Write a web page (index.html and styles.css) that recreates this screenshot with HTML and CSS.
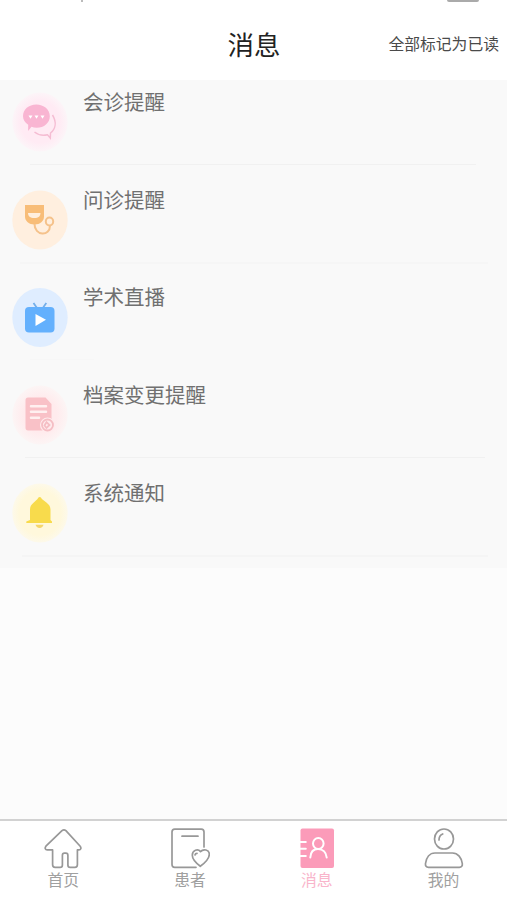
FILE: index.html
```html
<!DOCTYPE html>
<html lang="zh-CN">
<head>
<meta charset="utf-8">
<title>消息</title>
<link rel="stylesheet" href="styles.css">
</head>
<body>
<div class="app">
  <header class="header">
    <i class="status-tick"></i><i class="status-pill"></i>
    <h1 class="title">消息</h1>
    <span class="read-all">全部标记为已读</span>
  </header>
  <main class="list">
    <div class="row line-a">
      <svg class="icon" viewBox="0 0 56 60"><defs><radialGradient id="pinkGlow"><stop offset=".7" stop-color="#ffebf4"/><stop offset="1" stop-color="#fcf5f8"/></radialGradient></defs><ellipse cx="28" cy="30" rx="27.700" ry="29.500" fill="url(#pinkGlow)"/>
        <path class="pink-line" d="M22.500 40c3 2.500 8 4 13 2.800l2.800 3.200.2-5c4.800-4 6.500-10.500 2-18"/>
        <path class="pink" d="M24.300 12.500c7.600 0 13.500 5 13.500 11.700s-5.800 11.600-13 11.600c-2 0-3.700-.3-5.300-1l-3.400 4.200.1-6.200c-3.200-2.200-5.200-5-5.200-8.600 0-6.700 5.700-11.700 13.300-11.700Z"/>
        <path class="white" d="M16.500 23.500h4l-2 3.200ZM22.500 23.500h4l-2 3.200ZM28.500 23.500h4l-2 3.200Z"/></svg>
      <span class="label">会诊提醒</span>
    </div>
    <div class="row line-b">
      <svg class="icon" viewBox="0 0 56 60"><ellipse class="orange-bg" cx="28" cy="30" rx="27.700" ry="29.500"/>
        <path class="orange" d="M13 15h19v11.500c0 4.500-4 8-9.500 8S13 31 13 26.500Z"/><path class="cream" d="M16 23h12.500c0 3-2 5-6.200 5S16 26 16 23Z"/>
        <path class="orange-line" d="M22.500 34c0 12 15.500 13 15.500 1.500"/><ellipse class="orange-line" cx="37.500" cy="31.500" rx="3.700" ry="4"/></svg>
      <span class="label">问诊提醒</span>
    </div>
    <div class="row line-c">
      <svg class="icon" viewBox="0 -.5 56 60"><ellipse class="blue-bg" cx="28" cy="30" rx="27.700" ry="29.500"/>
        <path class="blue-line" d="m21.500 15.500 3.500 5m9.300-5-3.500 5"/><rect class="blue" x="13" y="19.500" width="29.500" height="25.500" rx="4"/><path class="white" d="M23.500 26.500 34 32.300l-10.500 6.200Z"/></svg>
      <span class="label">学术直播</span>
    </div>
    <div class="row line-d">
      <svg class="icon" viewBox="0 0 56 60"><defs><radialGradient id="roseGlow"><stop offset=".6" stop-color="#ffebed"/><stop offset="1" stop-color="#fcf5f5"/></radialGradient></defs><ellipse cx="28" cy="30" rx="27.700" ry="29.500" fill="url(#roseGlow)"/>
        <path class="rose" d="M16 12.500h17.500L39.500 19v26.500H16c-1.500 0-2.500-1-2.500-2.500V15c0-1.500 1-2.500 2.500-2.500Z"/><path class="paper-line" d="M19 21.200h15M19 26.700h15M19 32.700h8"/>
        <ellipse class="badge-bg" cx="35.500" cy="40" rx="7.500" ry="7.500"/><circle class="rose-line" cx="35.500" cy="40" r="5.500"/><path class="rose-line" d="m34.500 37.200 3 2.800-3 3-2-2.500Z"/></svg>
      <span class="label">档案变更提醒</span>
    </div>
    <div class="row line-e">
      <svg class="icon" viewBox="0 0 56 60"><defs><radialGradient id="yellowGlow"><stop offset=".75" stop-color="#fff8dc"/><stop offset="1" stop-color="#fdf9ea"/></radialGradient></defs><ellipse cx="28" cy="30" rx="27.700" ry="29.500" fill="url(#yellowGlow)"/>
        <path class="yellow" d="M27.700 14c1 0 1.600.8 2.200 1.900l4.500 3.600c2.900 2.300 4.100 4 4.100 7.500v10l1.500 1.500V40H14.300v-1.500L18 37V27c0-3.500 1-5.200 3.800-7.500l3.700-3.600c.6-1.100 1.200-1.900 2.200-1.900Z"/><path class="yellow-dark" d="M23.500 41.700h8c-.4 1.900-1.800 3.300-3.900 3.300S24 43.600 23.500 41.700Z"/></svg>
      <span class="label">系统通知</span>
    </div>
  </main>
  <nav class="tabs">
    <a class="tab"><svg class="tab-icon" viewBox="-.7 0 40 42"><path d="M18.300 2.600c1.300-1.100 2.600-1.100 3.900 0L36.500 18.200c1.300 1.800.7 3.700-1.300 3.700h-1.500v14.500c0 2-.8 2.900-2.500 2.900h-4.700c-1.700 0-2.300-.8-2.300-2.400v-9.500c0-1.600-.7-2.300-2-2.300h-1.500c-1.300 0-2 .7-2 2.300v9.500c0 1.600-.7 2.400-2.300 2.400h-5c-1.700 0-2.500-.9-2.500-2.900V21.900H3.500c-2 0-2.600-1.900-1.300-3.700Z"/></svg><span>首页</span></a>
    <a class="tab"><svg class="tab-icon" viewBox="-.5 0 40 42"><path d="M33.500 19V4c0-2-.8-2.800-2.700-2.800H4.200c-1.900 0-2.700.8-2.700 2.800v32.500c0 2 .8 2.800 2.700 2.800h21.300M11.500 8.200h16"/><path d="M29.800 38.300c-5-3.800-8-7-8-11 0-5.300 5.600-6.800 8.200-3.700 2.800-3.100 8.800-2.100 8.800 2.700 0 4.200-4 8.400-9 12ZM24.500 27c.2-1 1-1.700 2-1.700"/></svg><span>患者</span></a>
    <a class="tab active"><svg class="tab-icon" viewBox="0 0 40 42"><rect class="tab-fill" x="3.500" y=".5" width="33.500" height="39.500" rx="2"/><path class="tab-white" d="M2.500 14h6.300M2.500 20.800h6.300M2.500 28h6.300M13.300 29.500c.3-5.300 3-8.500 7.700-8.500s8.200 3.200 8.700 8.500"/><ellipse class="tab-white" cx="21.300" cy="15.500" rx="5.300" ry="5.500"/></svg><span>消息</span></a>
    <a class="tab"><svg class="tab-icon" viewBox="0 0 40 42"><ellipse cx="20" cy="11" rx="9.500" ry="10"/><path d="M15 12c0-3 1.200-5 3.700-6M11 25h17.500c5.500 0 9 4.800 9.800 10.500.3 2.500-.7 3.800-3 3.800H4.500c-2.300 0-3.300-1.300-3-3.800C2.300 29.800 5.500 25 11 25Z"/></svg><span>我的</span></a>
  </nav>
</div>
</body>
</html>
```
FILE: styles.css
```css
* { box-sizing: border-box; }
body { margin: 0; font-family: "Noto Sans CJK SC", sans-serif; background: #fcfcfc; }
.app { display: flex; flex-direction: column; height: 900px; overflow: hidden; }
.header { position: relative; display: grid; grid-template-columns: 1fr auto 1fr; align-items: center; height: 80px; padding: 8px 8px 0 9px; background: #fff; }
.status-tick { position: absolute; left: 81px; top: 0; width: 2px; height: 2px; background: #bbb; }
.status-pill { position: absolute; left: 447px; top: 0; width: 32px; height: 2px; border-radius: 0 0 2px 2px; background: #aaa; }
.title { grid-column: 2; margin: 0; font-size: 26.500px; font-weight: 400; line-height: 40px; color: #222; }
.read-all { justify-self: end; font-size: 15.800px; line-height: 24px; color: #4a4a4a; white-space: nowrap; }
.list { background: #f9f9f9; }
.row { display: flex; height: 97.700px; padding: 12px 0 0 12px; gap: 15px; background-repeat: no-repeat; }
.icon { width: 56px; height: 60px; flex: none; }
.label { margin-top: -6px; font-size: 20.500px; line-height: 30px; height: 30px; color: #707070; }
.line-a, .line-b, .line-c, .line-d, .line-e { background-image: linear-gradient(#f1f1f1, #f1f1f1); background-size: 446px 1px; background-position: 30px 84px; }
.line-b { background-image: linear-gradient(#f6f6f6, #f6f6f6); background-size: 468px 2px; background-position: 20px 84px; }
.line-c { background-image: linear-gradient(#f7f7f7, #f7f7f7); background-size: 64px 1px; }
.line-d { background-size: 460px 1px; background-position: 25px 84px; }
.line-e { background-image: linear-gradient(#f5f5f5, #f5f5f5); background-size: 466px 2px; background-position: 22px 84px; }
.white { fill: #fff; }
.pink { fill: #f9b5d2; }
.pink-line { fill: none; stroke: #f5bdd3; stroke-width: 1.500; }
.orange-bg { fill: #ffefdf; }
.orange { fill: #f8bd78; }
.cream { fill: #ffefdf; }
.orange-line { fill: none; stroke: #f5c28b; stroke-width: 2; }
.blue-bg { fill: #dfedff; }
.blue { fill: #63b0fd; }
.blue-line { fill: none; stroke: #72aeea; stroke-width: 1.800; }
.rose { fill: #f9c1c7; }
.paper-line { fill: none; stroke: #fff0f0; stroke-width: 2.500; stroke-linecap: round; }
.badge-bg { fill: #ffebed; }
.rose-line { fill: none; stroke: #f5bec4; stroke-width: 1.800; }
.yellow { fill: #f8db4c; }
.yellow-dark { fill: #f5d66c; }
.tabs { display: grid; grid-template-columns: repeat(4, 1fr); height: 81px; margin-top: auto; border-top: 2px solid #d2d2d2; background: #fff; }
.tab { display: flex; flex-direction: column; align-items: center; padding-top: 7px; font-size: 15.800px; line-height: 20px; color: #a0a0a0; }
.tab-icon { width: 40px; height: 42px; fill: none; stroke: #989898; stroke-width: 1.700; stroke-linecap: round; stroke-linejoin: round; }
.active { color: #f9b5cb; }
.tab-icon .tab-fill { fill: #fb9bb9; stroke: none; }
.tab-icon .tab-white { stroke: #fff; stroke-width: 2; }
```
